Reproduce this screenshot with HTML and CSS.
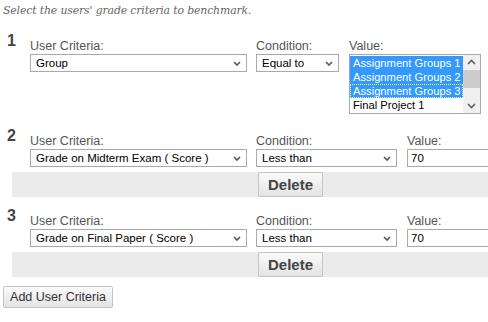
FILE: index.html
```html
<!DOCTYPE html>
<html lang="en">
<head>
  <meta charset="UTF-8" />
  <title>Benchmark Criteria</title>
  <link rel="stylesheet" href="styles.css">
</head>
<body>
  <div class="page">
    <p class="intro">Select the users' grade criteria to benchmark.</p>

    <!-- Criteria 1 -->
    <div class="criteria">
      <div class="crit-num">1</div>
      <div class="field f-user">
        <label>User Criteria:</label>
        <div class="select">
          <span>Group</span>
          <svg class="chev" width="8" height="5" viewBox="0 0 8 5"><path d="M1 1 L4 4 L7 1" fill="none" stroke="#555" stroke-width="1.6"/></svg>
        </div>
      </div>
      <div class="field f-cond short">
        <label>Condition:</label>
        <div class="select">
          <span>Equal to</span>
          <svg class="chev" width="8" height="5" viewBox="0 0 8 5"><path d="M1 1 L4 4 L7 1" fill="none" stroke="#555" stroke-width="1.6"/></svg>
        </div>
      </div>
      <div class="field f-value">
        <label>Value:</label>
        <div class="listbox">
          <div class="options">
            <div class="option selected">Assignment Groups 1</div>
            <div class="option selected">Assignment Groups 2</div>
            <div class="option selected focused">Assignment Groups 3</div>
            <div class="option">Final Project 1</div>
          </div>
          <div class="scrollbar">
            <svg class="arrow" width="17" height="14" viewBox="0 0 17 14"><path d="M5 9 L8.5 5.5 L12 9" fill="none" stroke="#606060" stroke-width="1.6"/></svg>
            <div class="track"><div class="thumb"></div></div>
            <svg class="arrow" width="17" height="14" viewBox="0 0 17 14"><path d="M5 5 L8.5 8.5 L12 5" fill="none" stroke="#606060" stroke-width="1.6"/></svg>
          </div>
        </div>
      </div>
    </div>

    <!-- Criteria 2 -->
    <div class="criteria">
      <div class="crit-num">2</div>
      <div class="field f-user">
        <label>User Criteria:</label>
        <div class="select">
          <span>Grade on Midterm Exam ( Score )</span>
          <svg class="chev" width="8" height="5" viewBox="0 0 8 5"><path d="M1 1 L4 4 L7 1" fill="none" stroke="#555" stroke-width="1.6"/></svg>
        </div>
      </div>
      <div class="field f-cond">
        <label>Condition:</label>
        <div class="select">
          <span>Less than</span>
          <svg class="chev" width="8" height="5" viewBox="0 0 8 5"><path d="M1 1 L4 4 L7 1" fill="none" stroke="#555" stroke-width="1.6"/></svg>
        </div>
      </div>
      <div class="field f-value">
        <label>Value:</label>
        <input class="text-input" type="text" value="70">
      </div>
    </div>
    <div class="crit-actions">
      <button class="delete-btn">Delete</button>
    </div>

    <!-- Criteria 3 -->
    <div class="criteria">
      <div class="crit-num">3</div>
      <div class="field f-user">
        <label>User Criteria:</label>
        <div class="select">
          <span>Grade on Final Paper ( Score )</span>
          <svg class="chev" width="8" height="5" viewBox="0 0 8 5"><path d="M1 1 L4 4 L7 1" fill="none" stroke="#555" stroke-width="1.6"/></svg>
        </div>
      </div>
      <div class="field f-cond">
        <label>Condition:</label>
        <div class="select">
          <span>Less than</span>
          <svg class="chev" width="8" height="5" viewBox="0 0 8 5"><path d="M1 1 L4 4 L7 1" fill="none" stroke="#555" stroke-width="1.6"/></svg>
        </div>
      </div>
      <div class="field f-value">
        <label>Value:</label>
        <input class="text-input" type="text" value="70">
      </div>
    </div>
    <div class="crit-actions">
      <button class="delete-btn">Delete</button>
    </div>

    <button class="add-btn">Add User Criteria</button>
  </div>
</body>
</html>
```

FILE: styles.css
```css
* {
  box-sizing: border-box;
  margin: 0;
  padding: 0;
}
html, body {
  overflow: hidden;
}
body {
  font-family: Arial, 'Liberation Sans', sans-serif;
  background-color: #fff;
  color: #444;
}
.page {
  width: 488px;
  height: 322px;
  padding-left: 3px;
  overflow: hidden;
}
.intro {
  font-family: 'DejaVu Serif', 'Liberation Serif', serif;
  font-style: italic;
  font-size: 10.9px;
  line-height: 22px;
  color: #666;
  margin-bottom: 4px;
  letter-spacing: -0.15px;
}
.criteria {
  display: flex;
  align-items: flex-start;
  margin-top: 9px;
  padding-left: 3px;
  white-space: nowrap;
}
.crit-num {
  width: 24px;
  flex-shrink: 0;
  font-size: 16px;
  line-height: 18px;
  font-weight: bold;
  color: #444;
  padding-left: 1px;
  padding-top: 1px;
}
.field {
  padding-top: 7px;
  margin-right: 9px;
  flex-shrink: 0;
}
.field label {
  display: block;
  font-size: 12.5px;
  line-height: 16px;
  color: #555;
}
.f-user {
  width: 217px;
}
.f-cond {
  width: 141px;
  margin-right: 10px;
}
.f-cond.short {
  width: 83px;
}
.f-value {
  width: 132px;
}
.select {
  display: flex;
  align-items: center;
  justify-content: space-between;
  height: 18px;
  border: 1px solid #a9a9a9;
  background-color: #fff;
  padding: 0 5px 0 5px;
  font-size: 11.5px;
  color: #000;
}
.select .chev {
  flex-shrink: 0;
}
.listbox {
  display: flex;
  height: 60px;
  border: 1px solid #a9a9a9;
  background-color: #fff;
  margin-bottom: 3px;
  padding: 1px 0;
}
.options {
  flex: 1;
  overflow: hidden;
}
.option {
  height: 14px;
  line-height: 14px;
  font-size: 11.2px;
  padding-left: 3px;
  color: #000;
}
.option.selected {
  background-color: #3399ff;
  color: #fff;
}
.option.focused {
  outline: 1px dotted #e8f2ff;
  outline-offset: -1px;
}
.scrollbar {
  width: 17px;
  flex-shrink: 0;
  display: flex;
  flex-direction: column;
  background-color: #f0f0f0;
  margin-top: -1px;
  margin-bottom: -1px;
}
.scrollbar .arrow {
  display: block;
  flex-shrink: 0;
}
.track {
  flex: 1;
  padding-top: 1px;
}
.thumb {
  height: 18px;
  background-color: #cdcdcd;
}
.text-input {
  display: block;
  width: 140px;
  height: 18px;
  border: 1px solid #a9a9a9;
  padding: 0 3px;
  font-family: Arial, 'Liberation Sans', sans-serif;
  font-size: 11.5px;
  color: #000;
  outline: none;
}
.crit-actions {
  margin-top: 5px;
  margin-left: 9px;
  width: 500px;
  height: 25px;
  padding-left: 246px;
  background-color: #ebebeb;
}
button {
  font-family: Arial, 'Liberation Sans', sans-serif;
  border: 1px solid #c4c4c4;
  border-radius: 2px;
  background: linear-gradient(#fafafa, #e4e4e4);
  cursor: pointer;
}
.delete-btn {
  width: 65px;
  height: 25px;
  font-size: 15px;
  font-weight: bold;
  color: #444;
}
.add-btn {
  display: block;
  margin-top: 9px;
  width: 110px;
  height: 22px;
  font-size: 12.5px;
  color: #333;
}
```
